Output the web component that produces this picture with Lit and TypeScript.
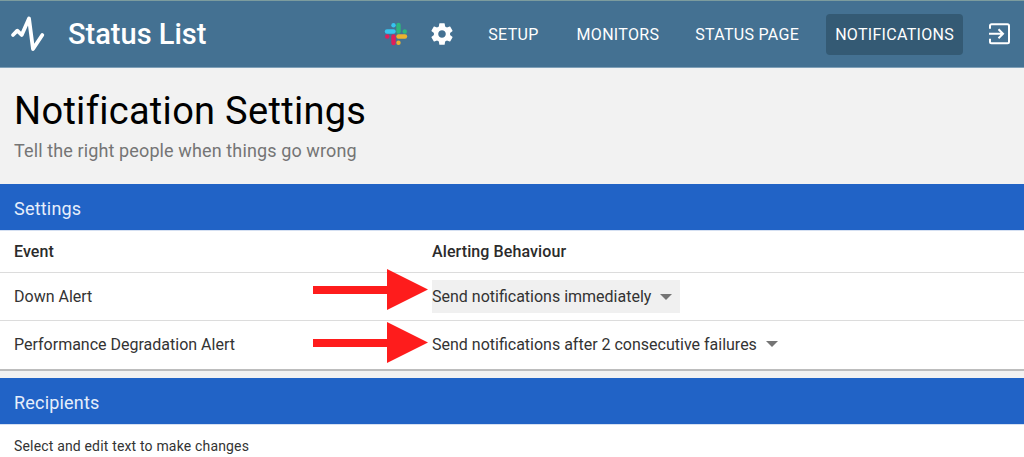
import { LitElement, html, css } from "lit";
import { customElement } from "lit/decorators.js";

const Arrow = () => html`<svg width="116" height="44" viewBox="0 0 116 44"><polygon points="1,18 75,18 75,1 116,21.500 75,42 75,26 1,26" fill="#fe1c1c"/></svg>`;
const Caret = () => html`<svg class="caret" width="12" height="6" viewBox="0 0 12 6"><polygon points="0,0 12,0 6,6" fill="#757575"/></svg>`;

@customElement("app-root")
export class AppRoot extends LitElement {
  static styles = css`
    :host { display: block; width: 1024px; height: 457px; overflow: hidden; background: #fff; font-family: Roboto, sans-serif; color: #333; }
    .top { height: 68px; box-sizing: border-box; background: #447192; border-top: 1px solid #7c9c9e; border-bottom: 1px solid #7fa0b8; display: flex; align-items: center; }
    .logo { margin-left: 10px; flex: none; }
    .brand { margin-left: 22px; font-size: 29px; font-weight: 500; color: #fff; flex: none; }
    .nav { margin-left: auto; display: flex; align-items: center; }
    .slack { margin-right: 21px; display: block; }
    .gear { margin-right: 24px; display: block; }
    .link { font-size: 16px; color: #fff; letter-spacing: 0.3px; padding: 0 9px; height: 41px; display: flex; align-items: center; border-radius: 4px; margin-right: 18px; white-space: nowrap; }
    .link.first { margin-right: 20px; }
    .link.active { background: #345a74; margin-right: 25px; }
    .exit { margin-right: 14px; display: block; }
    .hero { height: 116px; box-sizing: border-box; background: #f2f2f2; padding: 21px 14px 0; }
    h1 { margin: 0; font-size: 38px; line-height: 44px; font-weight: 400; color: #000; letter-spacing: 0.3px; }
    .sub { margin-top: 7px; font-size: 18px; line-height: 22px; color: #757575; letter-spacing: 0.12px; }
    .bar { height: 47px; box-sizing: border-box; background: #2163c6; color: #e6eefb; font-size: 18px; display: flex; align-items: center; padding: 2px 14px 0; letter-spacing: 0.2px; border-bottom: 1px solid #d5e0f2; }
    .table { position: relative; }
    .row { display: grid; grid-template-columns: 418px 1fr; align-items: center; padding-left: 14px; font-size: 16px; height: 48px; box-sizing: border-box; border-bottom: 1px solid #dcdcdc; color: #333; }
    .row.head { height: 42px; font-weight: 500; color: #2b2b2b; letter-spacing: 0.1px; }
    .row.last { border-bottom: none; height: 48px; padding-bottom: 2px; }
    .select { display: inline-flex; align-items: center; gap: 9px; height: 33px; justify-self: start; }
    .select.hover { background: #f0f0f0; padding-right: 8px; }
    .caret { flex: none; }
    .arrow { position: absolute; left: 312px; }
    .arrow svg { display: block; }
    .a1 { top: 37px; }
    .a2 { top: 90px; }
    .gap { height: 9px; box-sizing: border-box; background: #f2f2f2; border-top: 2px solid #bdbdbd; }
    .note { padding: 12px 14px 0; font-size: 14px; line-height: 18px; letter-spacing: 0.17px; color: #333; }
  `;

  render() {
    return html`
      <div class="top">
        <svg class="logo" width="36" height="38" viewBox="0 0 36 38">
          <polyline points="3,20 7.300,15.700 11.700,20 19,3.500 23,34 32.300,20" fill="none" stroke="#fff" stroke-width="3.800" stroke-linecap="round" stroke-linejoin="round"/>
        </svg>
        <div class="brand">Status List</div>
        <div class="nav">
          <svg class="slack" width="24" height="24" viewBox="0 0 24 24">
            <g stroke-width="4.400" stroke-linecap="round" fill="none">
              <path d="M3 9.500H9.500" stroke="#36c5f0"/><path d="M9.500 3.200V3.300" stroke="#36c5f0"/>
              <path d="M14.500 3V9.500" stroke="#2eb67d"/><path d="M20.800 9.500H20.700" stroke="#2eb67d"/>
              <path d="M21 14.500H14.500" stroke="#ecb22e"/><path d="M14.500 20.800V20.700" stroke="#ecb22e"/>
              <path d="M9.500 21V14.500" stroke="#e01e5a"/><path d="M3.200 14.500H3.300" stroke="#e01e5a"/>
            </g>
          </svg>
          <svg class="gear" width="26" height="26" viewBox="0 0 24 24">
            <path fill="#fff" d="M19.430 12.980c.04-.32.07-.64.07-.98s-.03-.66-.07-.98l2.110-1.650c.19-.15.24-.42.12-.64l-2-3.460c-.12-.22-.39-.3-.61-.22l-2.490 1c-.52-.4-1.080-.73-1.690-.98l-.38-2.650C14.460 2.180 14.250 2 14 2h-4c-.25 0-.46.18-.49.42l-.38 2.650c-.61.25-1.170.59-1.690.98l-2.490-1c-.23-.09-.49 0-.61.22l-2 3.460c-.13.22-.07.49.12.64l2.110 1.650c-.04.32-.07.65-.07.98s.03.66.07.98l-2.110 1.650c-.19.15-.24.42-.12.64l2 3.460c.12.22.39.3.61.22l2.490-1c.52.4 1.080.73 1.690.98l.38 2.650c.03.24.24.42.49.42h4c.25 0 .46-.18.49-.42l.38-2.650c.61-.25 1.170-.59 1.690-.98l2.490 1c.23.09.49 0 .61-.22l2-3.460c.12-.22.07-.49-.12-.64l-2.110-1.650zM12 15.500c-1.930 0-3.500-1.570-3.500-3.500s1.570-3.500 3.500-3.500 3.500 1.570 3.500 3.500-1.570 3.500-3.500 3.500z"/>
          </svg>
          <div class="link first">SETUP</div>
          <div class="link">MONITORS</div>
          <div class="link">STATUS PAGE</div>
          <div class="link active">NOTIFICATIONS</div>
          <svg class="exit" width="22" height="22" viewBox="1 2 22 20.500" fill="none" stroke="#fff" stroke-width="2">
            <path d="M3 7V4a1.500 1.500 0 0 1 1.500-1.500h16A1.500 1.500 0 0 1 22 4v16a1.500 1.500 0 0 1-1.500 1.500h-16A1.500 1.500 0 0 1 3 20v-3"/>
            <path d="M2 12h13M11.500 7.500 16 12l-4.500 4.500"/>
          </svg>
        </div>
      </div>
      <div class="hero">
        <h1>Notification Settings</h1>
        <div class="sub">Tell the right people when things go wrong</div>
      </div>
      <div class="bar">Settings</div>
      <div class="table">
        <div class="row head"><div>Event</div><div>Alerting Behaviour</div></div>
        <div class="row"><div>Down Alert</div><div class="select hover">Send notifications immediately ${Caret()}</div></div>
        <div class="row last"><div>Performance Degradation Alert</div><div class="select">Send notifications after 2 consecutive failures ${Caret()}</div></div>
        <div class="arrow a1">${Arrow()}</div>
        <div class="arrow a2">${Arrow()}</div>
      </div>
      <div class="gap"></div>
      <div class="bar">Recipients</div>
      <div class="note">Select and edit text to make changes</div>
    `;
  }
}
